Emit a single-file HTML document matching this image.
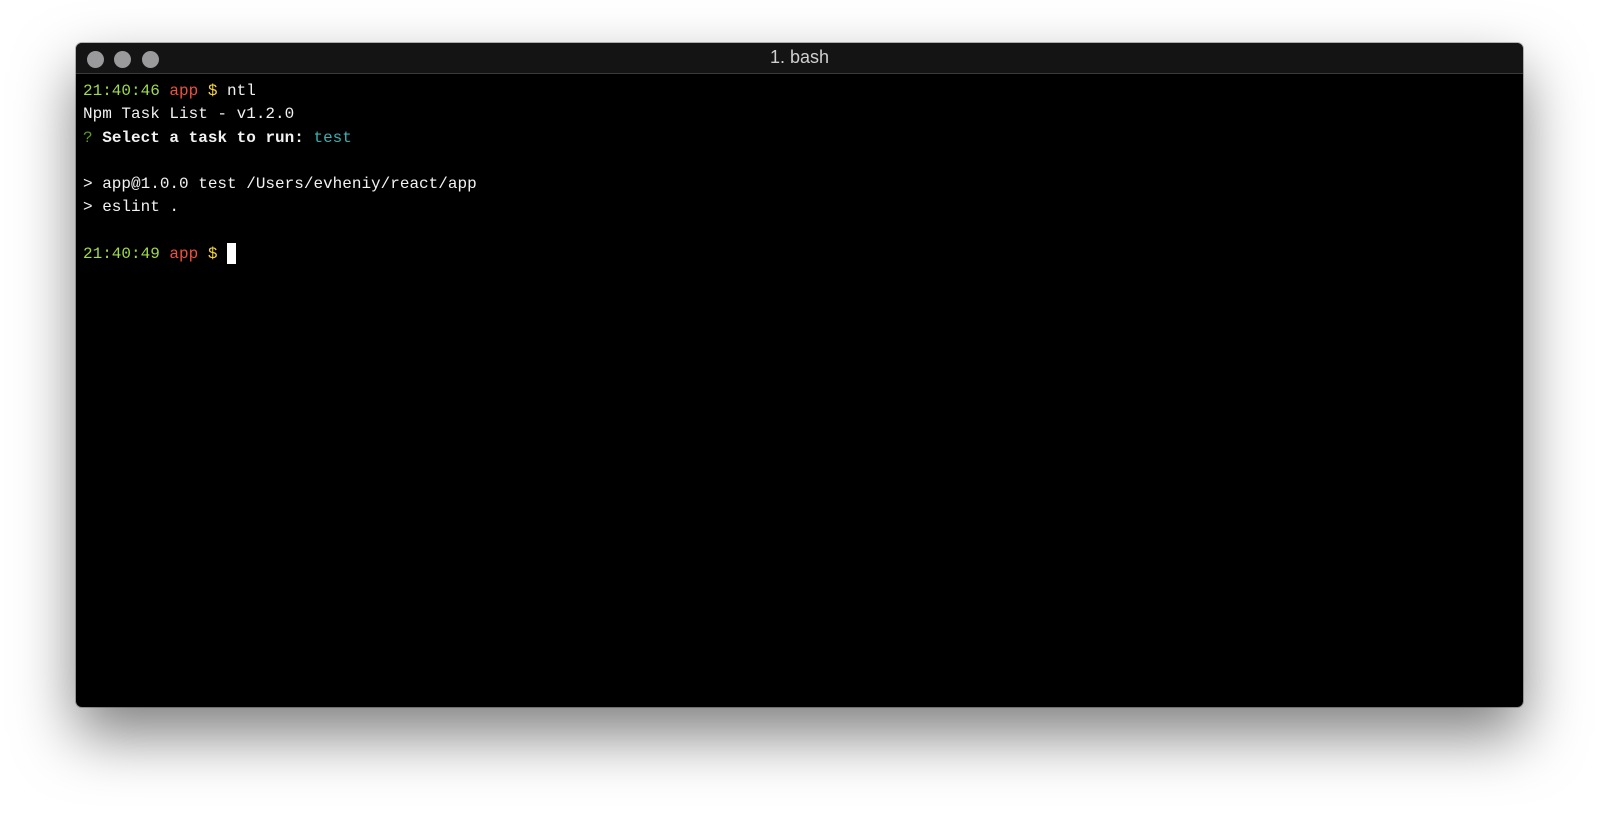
<!DOCTYPE html>
<html><head><meta charset="utf-8"><style>
html,body{margin:0;padding:0;background:#fff;width:1600px;height:816px;overflow:hidden}
.win{position:absolute;left:76px;top:43px;width:1447px;height:664px;background:#000;border-radius:6px;
box-shadow:0 28px 60px rgba(0,0,0,0.5),0 0 0 1px rgba(0,0,0,0.25);overflow:hidden}
.tb{height:30px;background:#141414;border-bottom:1px solid #3a3a3a;position:relative}
.dot{position:absolute;top:7.5px;width:17px;height:17px;border-radius:50%;background:#9a9a9c}
.title{position:absolute;left:0;right:0;top:4px;text-align:center;color:#cfcfcf;font:18px "Liberation Sans",sans-serif}
.term{position:absolute;left:7px;top:37px;font-family:"Liberation Mono",monospace;font-size:16px;line-height:23.3px;color:#f2f2f2;white-space:pre}
.g{color:#9fdc4a}.r{color:#f0503c}.y{color:#f5d442}.c{color:#3ab0b0}.q{color:#5a9a30}
b{font-weight:bold}
.cur{display:inline-block;width:9px;height:21px;background:#fff;vertical-align:top}
</style></head><body>
<div class="win">
<div class="tb"><div class="dot" style="left:10.5px"></div><div class="dot" style="left:37.5px"></div><div class="dot" style="left:65.5px"></div><div class="title">1. bash</div></div>
<div class="term"><span class="g">21:40:46</span> <span class="r">app</span> <span class="y">$</span> ntl
Npm Task List - v1.2.0
<span class="q">?</span> <b>Select a task to run:</b> <span class="c">test</span>

&gt; app@1.0.0 test /Users/evheniy/react/app
&gt; eslint .

<span class="g">21:40:49</span> <span class="r">app</span> <span class="y">$</span> <span class="cur"></span></div>
</div>
</body></html>
